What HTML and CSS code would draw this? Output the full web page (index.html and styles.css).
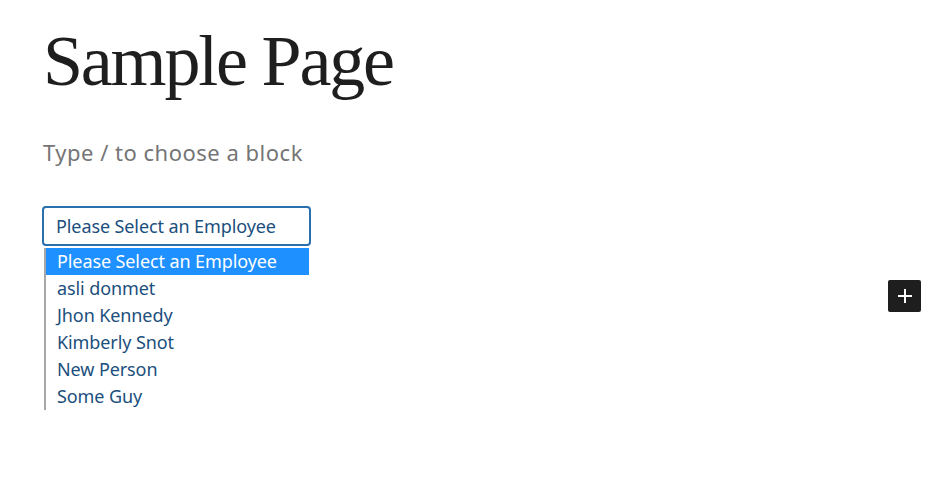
FILE: index.html
```html
<!DOCTYPE html>
<html>
<head>
<meta charset="utf-8">
<link rel="stylesheet" href="styles.css">
</head>
<body>
<main class="editor">
  <h1 class="title">Sample Page</h1>
  <p class="placeholder">Type / to choose a block</p>
  <div class="select-wrap">
    <div class="select">Please Select an Employee</div>
    <ul class="dropdown">
      <li class="opt active">Please Select an Employee</li>
      <li class="opt">asli donmet</li>
      <li class="opt">Jhon Kennedy</li>
      <li class="opt">Kimberly Snot</li>
      <li class="opt">New Person</li>
      <li class="opt">Some Guy</li>
    </ul>
  </div>
  <div class="inserter-row">
    <button class="inserter" aria-label="Add block">
      <svg width="24" height="24" viewBox="0 0 24 24"><path d="M11 5h2v6h6v2h-6v6h-2v-6H5v-2h6z" fill="#fff"/></svg>
    </button>
  </div>
</main>
</body>
</html>
```
FILE: styles.css
```css
html, body {
  margin: 0;
  padding: 0;
  background: #fff;
}
.editor {
  width: 944px;
  height: 480px;
  box-sizing: border-box;
  padding: 18px 23px 0 43px;
  display: flex;
  flex-direction: column;
}
.title {
  margin: 0;
  font-family: "Liberation Serif", serif;
  font-weight: normal;
  font-size: 72px;
  letter-spacing: -2.2px;
  line-height: 86px;
  color: #1e1e1e;
}
.placeholder {
  margin: 33px 0 0;
  font-family: "Noto Sans", sans-serif;
  font-size: 22px;
  line-height: 30px;
  color: #757575;
  letter-spacing: 0.5px;
}
.select-wrap {
  position: relative;
  margin-top: 39px;
  margin-left: -1px;
  width: 269px;
}
.select {
  box-sizing: border-box;
  height: 40px;
  width: 269px;
  border: 2px solid #2a6fae;
  border-radius: 4px;
  padding: 0 0 0 12px;
  font-family: "Noto Sans", sans-serif;
  font-size: 18px;
  letter-spacing: -0.1px;
  line-height: 36px;
  color: #1b4f7d;
}
.dropdown {
  position: absolute;
  left: 2px;
  top: 42px;
  width: 265px;
  margin: 0;
  padding: 0;
  list-style: none;
  border-left: 2px solid #a7a7a7;
  box-sizing: border-box;
  background: #fff;
}
.opt {
  height: 27px;
  line-height: 27px;
  padding-left: 11px;
  font-family: "Noto Sans", sans-serif;
  font-size: 18px;
  letter-spacing: -0.1px;
  color: #1b4f7d;
}
.opt.active {
  background: #1e90ff;
  color: #fff;
}
.inserter-row {
  display: flex;
  justify-content: flex-end;
  margin-top: 34px;
}
.inserter {
  width: 33px;
  height: 32px;
  padding: 0;
  border: none;
  border-radius: 2px;
  background: #1e1e1e;
  display: flex;
  align-items: center;
  justify-content: center;
}
```
